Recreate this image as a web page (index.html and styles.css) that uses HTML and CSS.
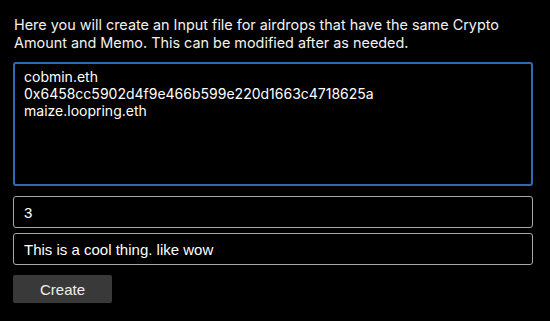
FILE: index.html
```html
<!DOCTYPE html>
<html lang="en">
<head>
<meta charset="utf-8">
<title>Airdrop Input</title>
<link rel="stylesheet" href="styles.css">
</head>
<body>
<main class="page">
  <p class="intro">Here you will create an Input file for airdrops that have the same Crypto Amount and Memo. This can be modified after as needed.</p>
  <form class="form">
    <textarea class="addresses">cobmin.eth
0x6458cc5902d4f9e466b599e220d1663c4718625a
maize.loopring.eth</textarea>
    <div class="fields">
      <input class="field" type="text" value="3">
      <input class="field" type="text" value="This is a cool thing. like wow">
    </div>
    <button class="create" type="button">Create</button>
  </form>
</main>
</body>
</html>
```

FILE: styles.css
```css
html, body {
  margin: 0;
  padding: 0;
  background: #000;
  color: #fff;
}

.page {
  padding: 16px 17px 0 13px;
  font-family: Inter, "Liberation Sans", sans-serif;
}

.intro {
  margin: 0 0 10px 1px;
  font-size: 14.4px;
  line-height: 18px;
  color: #f2f2f2;
}

.form {
  display: flex;
  flex-direction: column;
  align-items: flex-start;
}

.addresses {
  box-sizing: border-box;
  width: 520px;
  height: 124px;
  margin: 0;
  padding: 4px 9px;
  background: #000;
  color: #fff;
  border: 2px solid #2f6bb4;
  border-radius: 3px;
  font-family: Inter, "Liberation Sans", sans-serif;
  font-size: 14px;
  line-height: 17px;
  resize: none;
  outline: none;
}

.fields {
  display: flex;
  flex-direction: column;
  gap: 5px;
  margin-top: 10px;
}

.field {
  box-sizing: border-box;
  width: 520px;
  height: 32px;
  margin: 0;
  padding: 0 10px;
  background: #000;
  color: #fff;
  border: 1px solid #a8a8a8;
  border-radius: 3px;
  font-family: "Liberation Sans", Arial, sans-serif;
  font-size: 15px;
  outline: none;
}

.create {
  box-sizing: border-box;
  width: 99px;
  height: 28px;
  margin-top: 10px;
  padding: 0;
  background: #393939;
  color: #f0f0f0;
  border: none;
  border-radius: 2px;
  font-family: "Liberation Sans", Arial, sans-serif;
  font-size: 15px;
}
```
